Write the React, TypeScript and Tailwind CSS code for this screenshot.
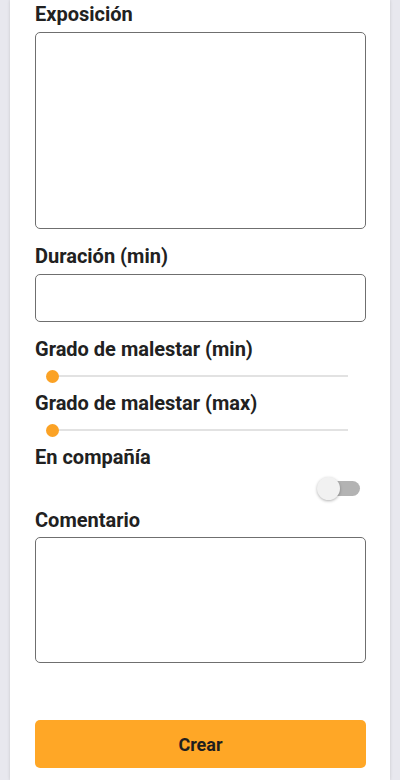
export default function App() {
  const label = "block text-[20px] leading-[22px] font-bold text-[#212121]";

  const Slider = () => (
    <div className="h-[32px] flex items-center">
      <div className="relative ml-[17px] mr-[18px] flex-1 h-[2px] bg-[#e2e2e2]">
        <span className="absolute -left-[6.5px] -top-[5.5px] w-[13px] h-[13px] rounded-full bg-[#fba225]" />
      </div>
    </div>
  );

  return (
    <div
      className="min-h-screen bg-[#e8e8ee] px-[10px]"
      style={{ fontFamily: "Roboto, 'Liberation Sans', sans-serif" }}
    >
      <div className="min-h-screen bg-white pl-[25px] pr-[24px] pt-[3px] pb-[12px] shadow-[0_0_3px_rgba(0,0,0,0.15)]">
        <label className={label}>Exposición</label>
        <textarea className="mt-[7px] block w-full h-[197px] rounded-[5px] border border-[#6f6f6f] resize-none" />

        <label className={`${label} mt-[16px]`}>Duración (min)</label>
        <input className="mt-[7px] block w-full h-[48px] rounded-[5px] border border-[#6f6f6f]" />

        <label className={`${label} mt-[16px]`}>Grado de malestar (min)</label>
        <Slider />

        <label className={label}>Grado de malestar (max)</label>
        <Slider />

        <label className={label}>En compañía</label>
        <div className="h-[41px] flex items-center justify-end pr-[6px]">
          <div className="relative w-[40px] h-[15px] rounded-full bg-[#b3b3b3]">
            <span className="absolute -left-[3px] -top-[4px] w-[23px] h-[23px] rounded-full bg-[#f1f1f1] shadow-[0_1px_3px_rgba(0,0,0,0.3)]" />
          </div>
        </div>

        <label className={label}>Comentario</label>
        <textarea className="mt-[6px] block w-full h-[126px] rounded-[5px] border border-[#6f6f6f] resize-none" />

        <button className="mt-[57px] block w-full h-[48px] rounded-[5px] bg-[#ffa726] text-[18px] font-bold text-[#1f1f1f]">
          Crear
        </button>
      </div>
    </div>
  );
}
